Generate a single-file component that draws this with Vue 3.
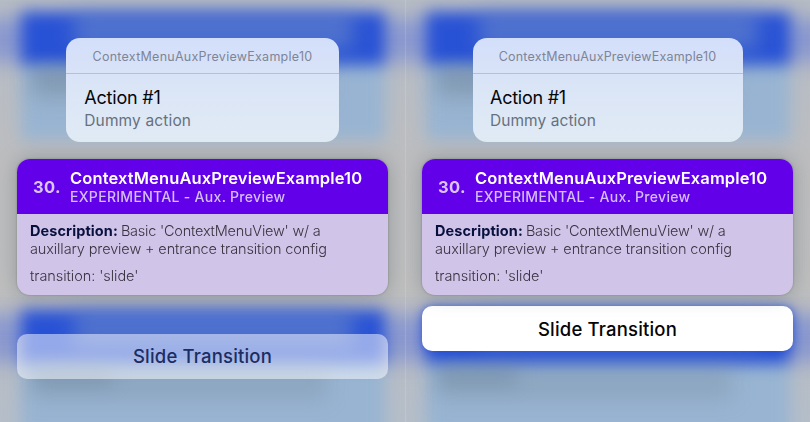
<script setup>
const panes = [
  { id: 'entering', state: 'entering' },
  { id: 'settled', state: 'settled' },
]
</script>

<template>
  <main class="stage">
    <section v-for="pane in panes" :key="pane.id" class="pane" :class="pane.state">
      <div class="backdrop" aria-hidden="true">
        <div class="glow glow-top"></div>
        <div class="glow glow-bottom"></div>
        <div class="ghost ghost-top">
          <div class="ghost-head"></div>
          <div class="ghost-body"></div>
        </div>
        <div class="ghost ghost-bottom">
          <div class="ghost-head"></div>
          <div class="ghost-body"></div>
        </div>
        <div class="smudges smudges-top"><i></i><b></b><u></u></div>
        <div class="smudges smudges-bottom"><i></i><b></b><u></u></div>
      </div>

      <div class="content">
        <div class="menu">
          <div class="menu-title"><span>ContextMenuAuxPreviewExample10</span></div>
          <div class="menu-item">
            <div class="action">Action #1</div>
            <div class="subtitle">Dummy action</div>
          </div>
        </div>

        <article class="card">
          <header class="card-head">
            <div class="index">30.</div>
            <div class="titles">
              <div class="title">ContextMenuAuxPreviewExample10</div>
              <div class="kind">EXPERIMENTAL - Aux. Preview</div>
            </div>
          </header>
          <div class="card-body">
            <div class="line"><strong>Description:</strong> <span class="l1">Basic 'ContextMenuView' w/ a</span></div>
            <div class="line"><span class="l2">auxillary preview + entrance transition config</span></div>
            <div class="line note"><span class="l3">transition: 'slide'</span></div>
          </div>
        </article>

        <div class="aux"><span>Slide Transition</span></div>
      </div>
    </section>
  </main>
</template>

<style>
body {
  margin: 0;
  overflow: hidden;
}
</style>

<style scoped>
.stage {
  display: flex;
  width: 810px;
  height: 422px;
  font-family: Inter, "Liberation Sans", sans-serif;
}
.pane {
  position: relative;
  width: 405px;
  height: 422px;
  overflow: hidden;
  background: linear-gradient(#b8bdc3 0, #b9bdc4 90px, #bdbdbf 160px, #bebebe 290px, #b8bdc4 350px, #b5bec9 422px);
}
.pane + .pane::before {
  content: "";
  position: absolute;
  z-index: 1;
  left: 0;
  top: 0;
  width: 1px;
  height: 100%;
  background: rgba(255, 255, 255, 0.12);
}
.backdrop {
  position: absolute;
  inset: 0;
}
.glow {
  position: absolute;
  left: -40px;
  right: -40px;
  background: #8b99cf;
  filter: blur(10px);
}
.glow-top { top: 18px; height: 44px; }
.glow-bottom { top: 314px; height: 48px; }
.ghost {
  position: absolute;
  left: 21px;
  right: 20px;
  background: #98b4d2;
  filter: blur(8px);
}
.ghost-top { top: 12px; height: 128px; }
.ghost-bottom { top: 310px; height: 160px; }
.ghost-head {
  height: 53px;
  background: #2852d5;
}
.ghost-bottom .ghost-head { height: 54px; }
.smudges {
  position: absolute;
  left: 20px;
  right: 20px;
  height: 124px;
}
.smudges-top { top: 12px; }
.smudges-bottom { top: 310px; }
.smudges i {
  display: block;
  height: 38px;
  margin: 0 32px 0 54px;
  background: rgba(118, 145, 200, 0.5);
  filter: blur(10px);
}
.smudges b {
  display: block;
  width: 80px;
  height: 18px;
  margin: 19px 0 0 12px;
  background: rgba(95, 118, 145, 0.36);
  filter: blur(9px);
}
.smudges u {
  display: block;
  width: 295px;
  height: 32px;
  margin: -18px 0 0 12px;
  background: rgba(118, 138, 155, 0.32);
  filter: blur(10px);
}
.content {
  position: relative;
  display: flex;
  flex-direction: column;
  align-items: center;
  padding: 37.5px 17px 0;
}
.menu {
  box-sizing: border-box;
  width: 272.5px;
  height: 104.5px;
  border-radius: 14px;
  overflow: hidden;
  background: linear-gradient(#d3defa 0%, #d9e4f7 40%, #e1ebf5 100%);
}
.settled .menu {
  width: 270px;
  height: 104px;
  margin-top: 0.5px;
}
.menu-title {
  display: flex;
  box-sizing: border-box;
  height: 36px;
  align-items: center;
  justify-content: center;
  padding-top: 2px;
  border-bottom: 1px solid #b3bfdb;
  font-size: 12.5px;
  letter-spacing: 0.26px;
  color: #7d8598;
}
.settled .menu-title { letter-spacing: 0.18px; }
.menu-item { padding: 12px 18px 0; }
.action {
  font-size: 18px;
  line-height: 24px;
  letter-spacing: -0.2px;
  color: #05070a;
}
.subtitle {
  font-size: 15.5px;
  line-height: 21px;
  letter-spacing: 0.14px;
  color: #66717f;
}
.settled .menu-item { padding-left: 17.5px; }
.settled .action { letter-spacing: -0.25px; }
.settled .subtitle { letter-spacing: 0.06px; }
.card {
  width: 371px;
  height: 136px;
  margin-top: 17px;
  border-radius: 13px;
  overflow: hidden;
  background: #d1c4e9;
  filter: drop-shadow(0 0 1px rgba(70, 80, 60, 0.4)) drop-shadow(0 0 10px rgba(60, 75, 85, 0.34));
}
.card-head {
  display: flex;
  height: 54.5px;
  background: #6200ea;
}
.index {
  box-sizing: border-box;
  width: 53px;
  padding: 16px 0 0 16px;
  font-size: 16.5px;
  font-weight: 700;
  line-height: 24px;
  letter-spacing: 0.4px;
  color: #dac4fa;
}
.titles { padding-top: 9px; white-space: nowrap; }
.title {
  font-size: 16.5px;
  font-weight: 600;
  line-height: 20px;
  letter-spacing: 0.12px;
  color: #fff;
}
.kind {
  font-size: 14px;
  font-weight: 500;
  line-height: 18px;
  letter-spacing: 0.3px;
  color: #d5bdf9;
}
.card-body {
  padding: 8px 13px 0;
  font-size: 14.5px;
  font-weight: 300;
  line-height: 18px;
  color: #38333f;
  white-space: nowrap;
}
.card-body strong {
  font-weight: 700;
  letter-spacing: 0.08px;
  color: #08103e;
}
.l1 { margin-left: -1px; letter-spacing: -0.22px; }
.l2 { letter-spacing: -0.12px; }
.l3 { letter-spacing: -0.06px; }
.note { margin-top: 9.5px; }
.aux {
  display: flex;
  width: 371px;
  height: 45px;
  margin-top: 38.5px;
  border-radius: 10px;
  align-items: center;
  justify-content: center;
  background: rgba(255, 255, 255, 0.5);
  font-size: 18.5px;
  font-weight: 500;
  letter-spacing: 0.18px;
  color: #1c2d61;
}
.settled .aux {
  margin-top: 11px;
  background: #fff;
  color: #050505;
  box-shadow: 0 1px 8px rgba(35, 75, 210, 0.55);
}
</style>
